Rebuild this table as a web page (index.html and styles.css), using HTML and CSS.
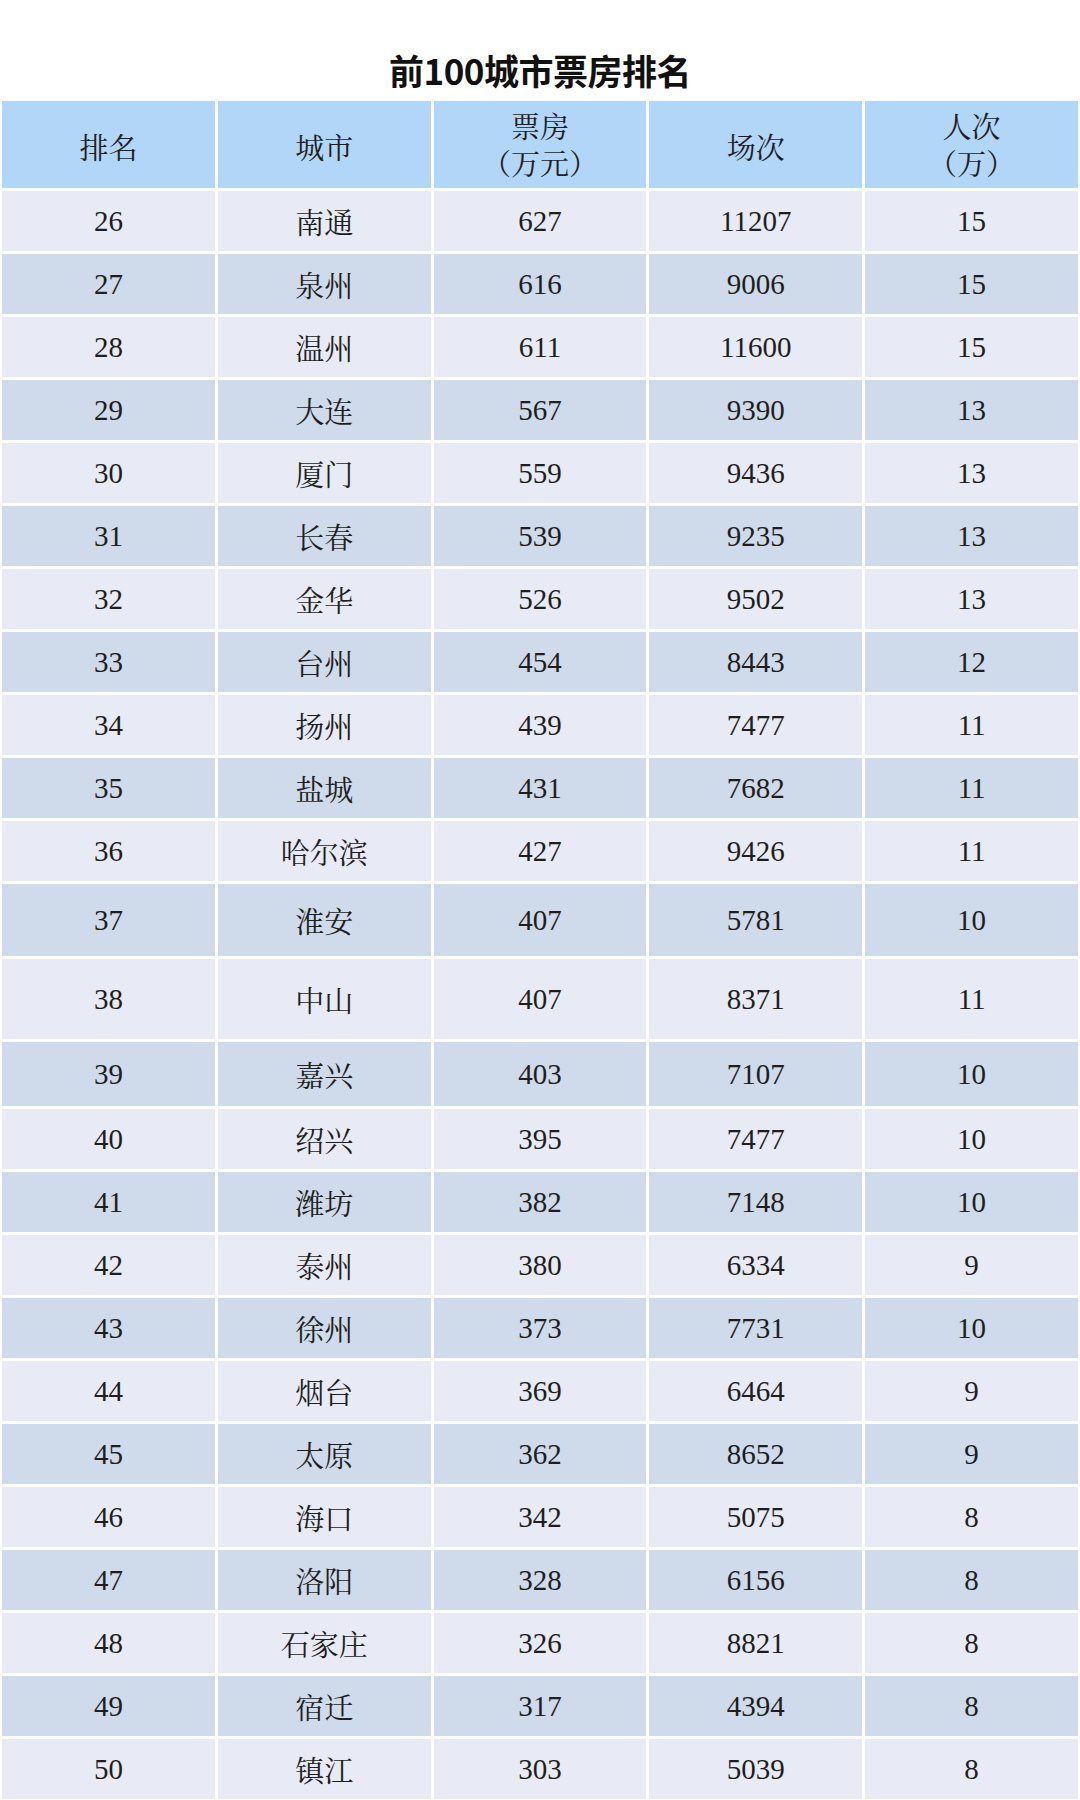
FILE: index.html
```html
<!DOCTYPE html>
<html lang="zh-CN">
<head>
<meta charset="utf-8">
<title>前100城市票房排名</title>
<link rel="stylesheet" href="styles.css">
</head>
<body>
<div class="page">
  <h1 class="title">前100城市票房排名</h1>
  <div class="table">
    <div class="row head">
      <div class="cell">排名</div>
      <div class="cell">城市</div>
      <div class="cell two"><span>票房</span><span>（万元）</span></div>
      <div class="cell">场次</div>
      <div class="cell two"><span>人次</span><span>（万）</span></div>
    </div>
    <div class="row light"><div class="cell">26</div><div class="cell">南通</div><div class="cell">627</div><div class="cell">11207</div><div class="cell">15</div></div>
    <div class="row dark"><div class="cell">27</div><div class="cell">泉州</div><div class="cell">616</div><div class="cell">9006</div><div class="cell">15</div></div>
    <div class="row light"><div class="cell">28</div><div class="cell">温州</div><div class="cell">611</div><div class="cell">11600</div><div class="cell">15</div></div>
    <div class="row dark"><div class="cell">29</div><div class="cell">大连</div><div class="cell">567</div><div class="cell">9390</div><div class="cell">13</div></div>
    <div class="row light"><div class="cell">30</div><div class="cell">厦门</div><div class="cell">559</div><div class="cell">9436</div><div class="cell">13</div></div>
    <div class="row dark"><div class="cell">31</div><div class="cell">长春</div><div class="cell">539</div><div class="cell">9235</div><div class="cell">13</div></div>
    <div class="row light"><div class="cell">32</div><div class="cell">金华</div><div class="cell">526</div><div class="cell">9502</div><div class="cell">13</div></div>
    <div class="row dark"><div class="cell">33</div><div class="cell">台州</div><div class="cell">454</div><div class="cell">8443</div><div class="cell">12</div></div>
    <div class="row light"><div class="cell">34</div><div class="cell">扬州</div><div class="cell">439</div><div class="cell">7477</div><div class="cell">11</div></div>
    <div class="row dark"><div class="cell">35</div><div class="cell">盐城</div><div class="cell">431</div><div class="cell">7682</div><div class="cell">11</div></div>
    <div class="row light"><div class="cell">36</div><div class="cell">哈尔滨</div><div class="cell">427</div><div class="cell">9426</div><div class="cell">11</div></div>
    <div class="row dark tall1"><div class="cell">37</div><div class="cell">淮安</div><div class="cell">407</div><div class="cell">5781</div><div class="cell">10</div></div>
    <div class="row light tall2"><div class="cell">38</div><div class="cell">中山</div><div class="cell">407</div><div class="cell">8371</div><div class="cell">11</div></div>
    <div class="row dark tall3"><div class="cell">39</div><div class="cell">嘉兴</div><div class="cell">403</div><div class="cell">7107</div><div class="cell">10</div></div>
    <div class="row light"><div class="cell">40</div><div class="cell">绍兴</div><div class="cell">395</div><div class="cell">7477</div><div class="cell">10</div></div>
    <div class="row dark"><div class="cell">41</div><div class="cell">潍坊</div><div class="cell">382</div><div class="cell">7148</div><div class="cell">10</div></div>
    <div class="row light"><div class="cell">42</div><div class="cell">泰州</div><div class="cell">380</div><div class="cell">6334</div><div class="cell">9</div></div>
    <div class="row dark"><div class="cell">43</div><div class="cell">徐州</div><div class="cell">373</div><div class="cell">7731</div><div class="cell">10</div></div>
    <div class="row light"><div class="cell">44</div><div class="cell">烟台</div><div class="cell">369</div><div class="cell">6464</div><div class="cell">9</div></div>
    <div class="row dark"><div class="cell">45</div><div class="cell">太原</div><div class="cell">362</div><div class="cell">8652</div><div class="cell">9</div></div>
    <div class="row light"><div class="cell">46</div><div class="cell">海口</div><div class="cell">342</div><div class="cell">5075</div><div class="cell">8</div></div>
    <div class="row dark"><div class="cell">47</div><div class="cell">洛阳</div><div class="cell">328</div><div class="cell">6156</div><div class="cell">8</div></div>
    <div class="row light"><div class="cell">48</div><div class="cell">石家庄</div><div class="cell">326</div><div class="cell">8821</div><div class="cell">8</div></div>
    <div class="row dark"><div class="cell">49</div><div class="cell">宿迁</div><div class="cell">317</div><div class="cell">4394</div><div class="cell">8</div></div>
    <div class="row light"><div class="cell">50</div><div class="cell">镇江</div><div class="cell">303</div><div class="cell">5039</div><div class="cell">8</div></div>
  </div>
</div>
</body>
</html>
```

FILE: styles.css
```css
html, body {
  margin: 0;
  padding: 0;
  background: #ffffff;
}

.page {
  width: 1080px;
  padding: 0 2px;
  box-sizing: border-box;
}

.title {
  margin: 0;
  height: 101px;
  padding-top: 47px;
  box-sizing: border-box;
  text-align: center;
  font-family: "Noto Sans CJK SC", "Noto Sans", sans-serif;
  font-weight: 700;
  font-size: 35px;
  line-height: 46px;
  color: #111111;
  letter-spacing: -0.5px;
}

.table {
  display: flex;
  flex-direction: column;
  gap: 3px;
}

.row {
  display: grid;
  grid-template-columns: repeat(5, 1fr);
  column-gap: 3px;
  height: 60px;
}

.row.head { height: 87px; }
.row.tall1 { height: 72px; }
.row.tall2 { height: 80px; }
.row.tall3 { height: 64px; }

.cell {
  display: flex;
  align-items: center;
  justify-content: center;
  font-family: "Liberation Serif", "Noto Serif CJK SC", "Noto Sans CJK SC", serif;
  font-size: 29px;
  color: #1e1e1e;
  font-weight: 400;
}

.head .cell {
  background: #b2d6f8;
  padding-top: 4px;
  box-sizing: border-box;
}

.head .cell.two {
  flex-direction: column;
  line-height: 37px;
}

.light .cell { background: #e8ebf5; }
.dark .cell { background: #cfdbeb; }
```
